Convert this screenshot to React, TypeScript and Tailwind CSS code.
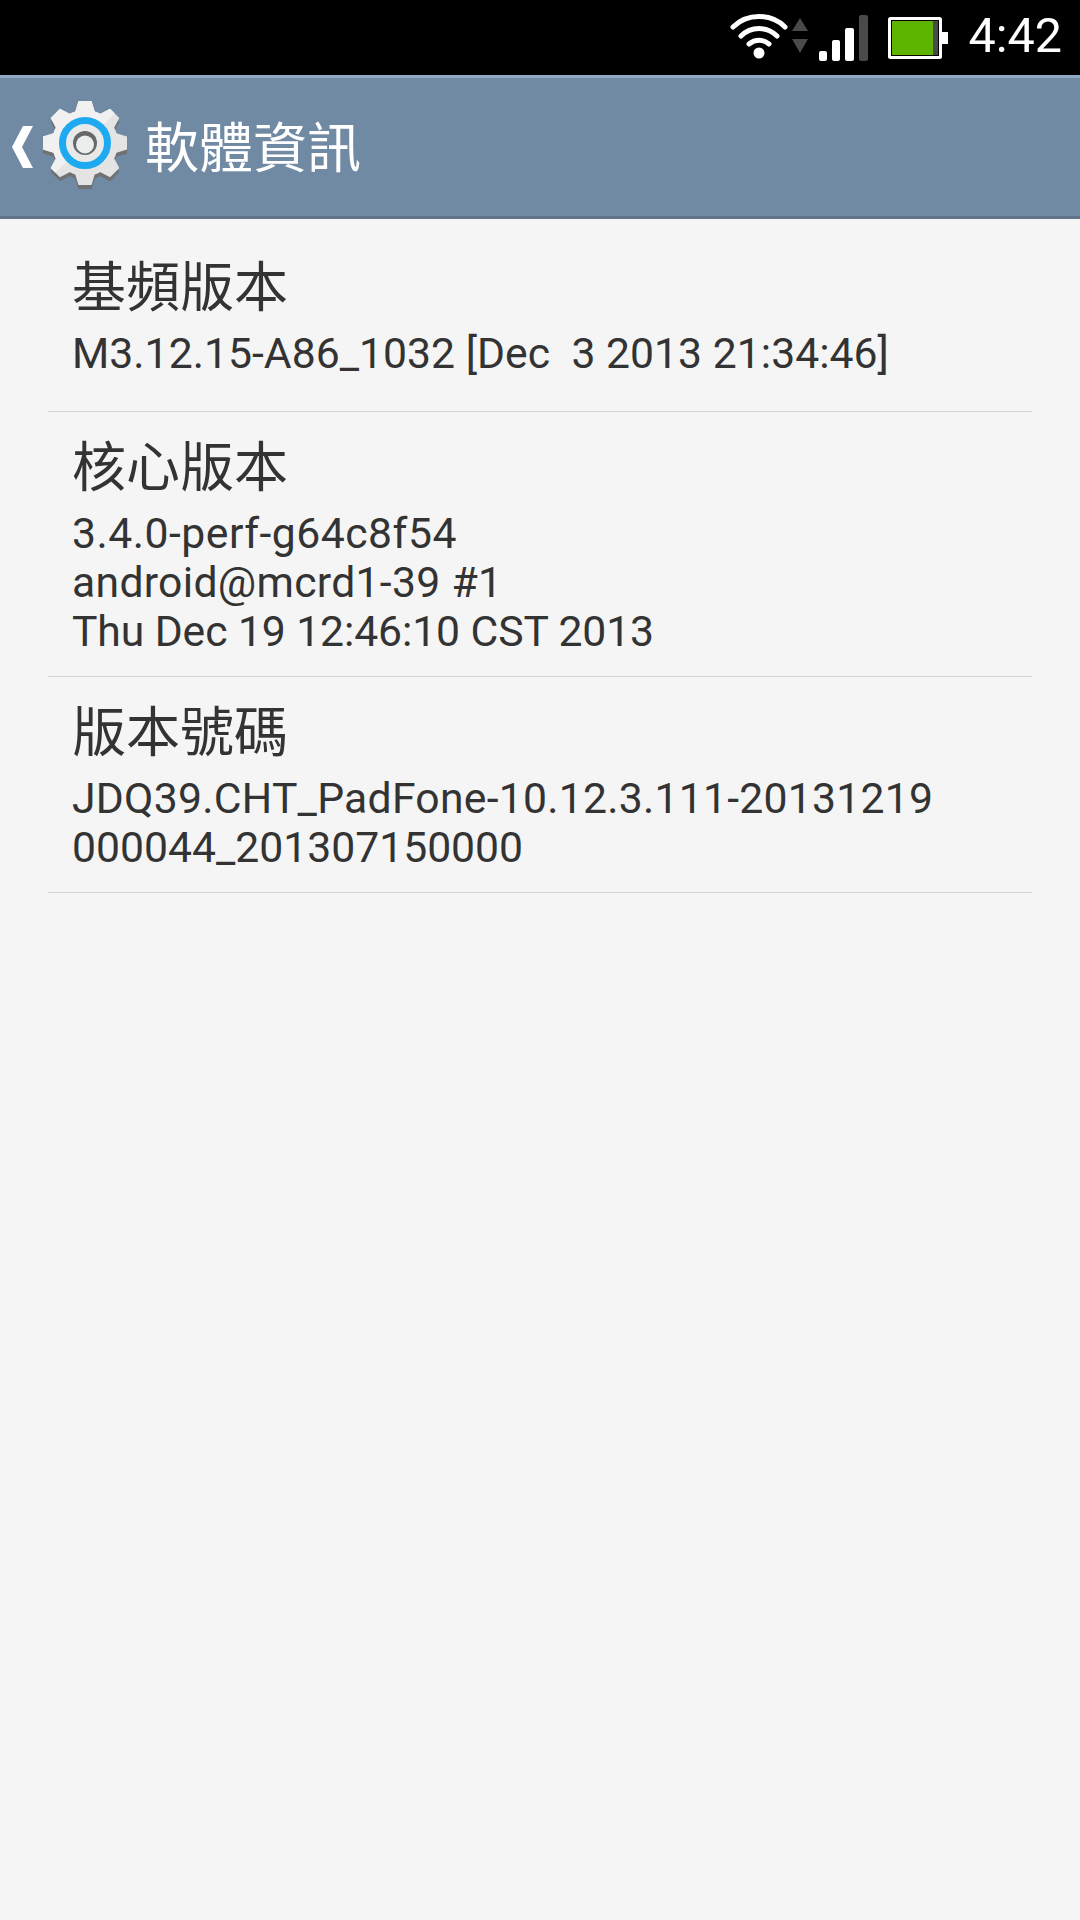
const cjk = "font-['Roboto','Noto_Sans_CJK_TC',sans-serif]";

function Gear() {
  const teeth = [0, 45, 90, 135, 180, 225, 270, 315];
  const gear = (
    <>
      <circle cx="45" cy="45" r="33" />
      {teeth.map((a) => (
        <path key={a} d="M34.5 16 L38.5 3 H51.5 L55.5 16 Z" transform={`rotate(${a} 45 45)`} />
      ))}
    </>
  );
  return (
    <svg width="90" height="94" viewBox="0 0 90 94" className="shrink-0 mt-[-4px]">
      <defs>
        <clipPath id="gear-shape">{gear}</clipPath>
      </defs>
      <g fill="#6f7173" transform="translate(0 4)">{gear}</g>
      <g fill="#e4e4e4">{gear}</g>
      <path d="M0 0 H90 L0 90 Z" fill="#f1f1f1" clipPath="url(#gear-shape)" />
      <circle cx="45" cy="45" r="22.5" fill="#e9e9e9" stroke="#1eaaf1" strokeWidth="7" />
      <circle cx="45" cy="45" r="12" fill="#66686a" />
      <circle cx="45" cy="46.5" r="9" fill="#eceded" />
    </svg>
  );
}

function StatusIcons() {
  return (
    <div className="flex items-center h-full pr-[18px]">
      <svg width="58" height="48" viewBox="0 0 58 48" className="mr-[4px] mt-[-3px]">
        <g fill="none" stroke="#fff" strokeWidth="5" strokeLinecap="round">
          <path d="M3 15 C17 1 41 1 55 15" />
          <path d="M11 24 C21 14 37 14 47 24" />
          <path d="M19 32 C25 27 33 27 39 32" />
        </g>
        <circle cx="29" cy="41" r="5.5" fill="#fff" />
      </svg>
      <svg width="16" height="36" viewBox="0 0 16 36" className="mr-[11px] mt-[-3px]">
        <path d="M8 0 L16 13 H0 Z M0 21 H16 L8 35 Z" fill="#4a4a4a" />
      </svg>
      <svg width="50" height="46" viewBox="0 0 50 46" className="mr-[19px] mt-[1px]">
        <rect x="0" y="36" width="8" height="10" rx="2" fill="#fff" />
        <rect x="13" y="25" width="8" height="21" rx="2" fill="#fff" />
        <rect x="26" y="13" width="9" height="33" rx="2" fill="#fff" />
        <rect x="40" y="0" width="9" height="46" rx="2" fill="#4a4a4a" />
      </svg>
      <svg width="60" height="42" viewBox="0 0 60 42" className="mr-[20px] mt-[1px]">
        <rect x="1.5" y="1.5" width="51" height="39" rx="1" fill="#000" stroke="#fff" strokeWidth="3" />
        <rect x="4" y="4" width="41" height="34" fill="#5cb400" />
        <rect x="45" y="4" width="5" height="34" fill="#4a4a4a" />
        <rect x="53" y="15" width="7" height="12" fill="#fff" />
      </svg>
      <span className="font-['Roboto',sans-serif] text-[48.5px] leading-none text-white font-normal mt-[-2px]">4:42</span>
    </div>
  );
}

type Line = { text: string; tracking: string };

function Row({ title, lines, className }: { title: string; lines: Line[]; className: string }) {
  return (
    <div className={`mx-[48px] px-[24px] border-b-[1px] border-[#d6d6d6] ${className}`}>
      <div className={`${cjk} text-[54px] leading-[64px] text-[#333] mb-[8px]`}>{title}</div>
      {lines.map((l) => (
        <div key={l.text} className={`${cjk} text-[42.7px] leading-[49px] text-[#333] whitespace-pre ${l.tracking}`}>
          {l.text}
        </div>
      ))}
    </div>
  );
}

export default function App() {
  return (
    <div className="w-[1080px] h-[1920px] bg-[#f5f5f5] overflow-hidden flex flex-col">
      <div className="h-[75px] bg-black flex justify-end shrink-0">
        <StatusIcons />
      </div>
      <div className="h-[144px] shrink-0 bg-[#708aa4] border-t-[3px] border-t-[#8fa9c4] border-b-[3px] border-b-[#5f7488] flex items-center">
        <svg width="21" height="42" viewBox="0 0 21 42" className="ml-[12px] mr-[7px] shrink-0">
          <path d="M11 0 H21 L10 21 L21 42 H11 L0 21 Z" fill="#fff" />
        </svg>
        <Gear />
        <div className={`${cjk} text-[54px] leading-none text-white ml-[15px] mt-[5px]`}>軟體資訊</div>
      </div>
      <div className="flex flex-col">
        <Row
          title="基頻版本"
          lines={[{ text: "M3.12.15-A86_1032 [Dec  3 2013 21:34:46]", tracking: "tracking-[0.03px]" }]}
          className="pt-[38px] pb-[33px]"
        />
        <Row
          title="核心版本"
          lines={[
            { text: "3.4.0-perf-g64c8f54", tracking: "tracking-[0.5px]" },
            { text: "android@mcrd1-39 #1", tracking: "tracking-[0.3px]" },
            { text: "Thu Dec 19 12:46:10 CST 2013", tracking: "tracking-[-0.1px]" },
          ]}
          className="pt-[25px] pb-[20px]"
        />
        <Row
          title="版本號碼"
          lines={[
            { text: "JDQ39.CHT_PadFone-10.12.3.111-20131219", tracking: "tracking-[0.26px]" },
            { text: "000044_201307150000", tracking: "tracking-normal" },
          ]}
          className="pt-[25px] pb-[20px]"
        />
      </div>
    </div>
  );
}
